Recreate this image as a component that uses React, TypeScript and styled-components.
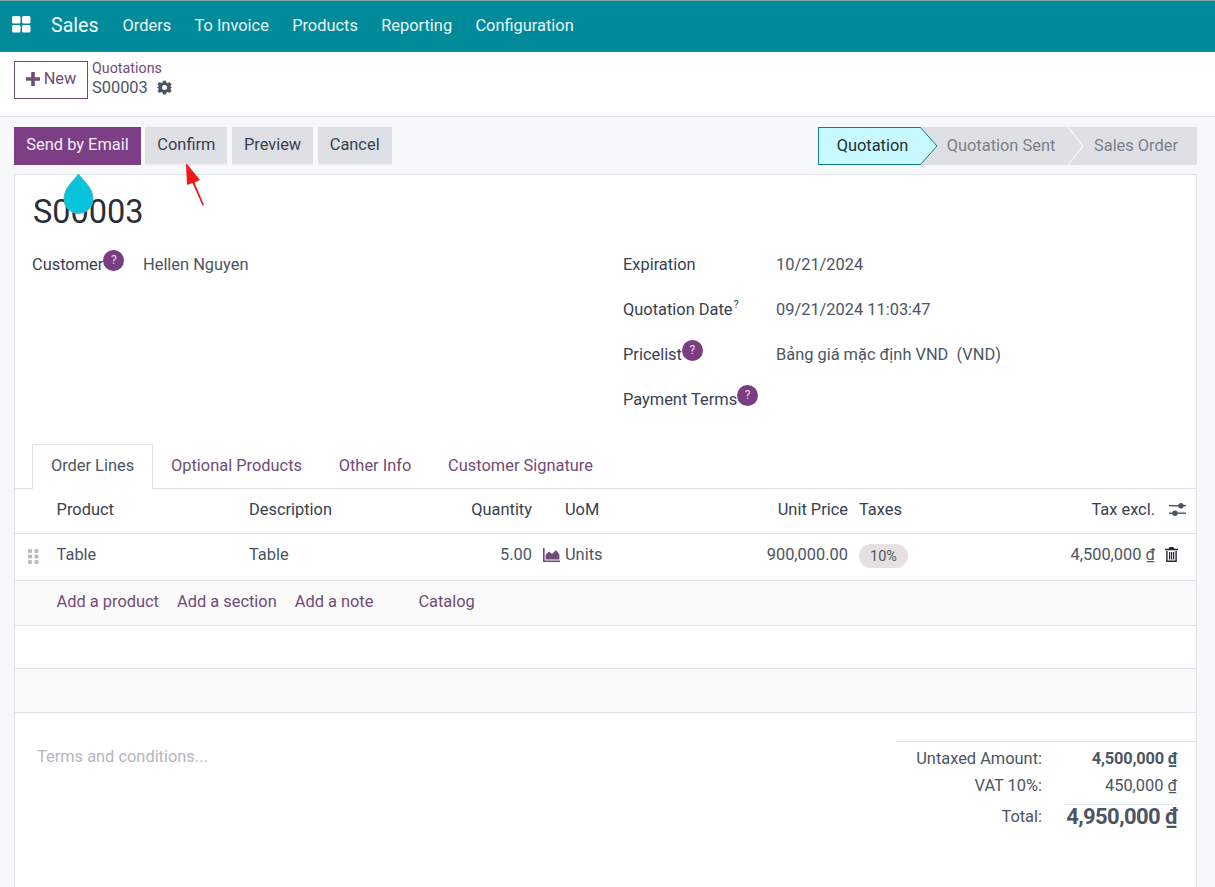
import React from 'react';
import styled, { createGlobalStyle } from 'styled-components';

const GlobalStyle = createGlobalStyle`
  html, body {
    margin: 0;
    padding: 0;
    height: 100%;
    overflow: hidden;
    background: #f7f8fa;
    font-family: Roboto, "Liberation Sans", sans-serif;
    font-size: 16.4px;
    color: #374151;
  }
`;

const Page = styled.div`
  position: relative;
  width: 1215px;
  height: 887px;
  overflow: hidden;
`;

const Navbar = styled.nav`
  display: flex;
  align-items: center;
  height: 51px;
  box-sizing: content-box;
  background: #018a9a;
  border-top: 1px solid #7fa8a8;
  padding: 0 0 0 12px;
  color: #fff;
`;

const AppsIcon = styled.svg`
  width: 19px;
  height: 17px;
  margin-right: 20px;
  margin-bottom: 4px;
`;

const Brand = styled.span`
  font-size: 19.6px;
  margin-right: 24px;
  padding-bottom: 2px;
  color: #f2fbfc;
`;

const NavItem = styled.span`
  margin-right: 23.3px;
  padding-bottom: 2px;
  color: #e8f6f7;
`;

const ControlPanel = styled.div`
  display: flex;
  align-items: flex-start;
  height: 65px;
  box-sizing: border-box;
  padding: 9px 14px 0;
  background: #fff;
  border-bottom: 1px solid #dfe1e6;
`;

const NewButton = styled.button`
  display: flex;
  align-items: center;
  justify-content: center;
  gap: 4px;
  width: 74px;
  height: 38px;
  padding: 0 0 3px;
  background: #fff;
  border: 1px solid #714b78;
  color: #714b78;
  font: inherit;
`;

const Crumbs = styled.div`
  margin: -1px 0 0 4px;
  display: flex;
  flex-direction: column;
`;

const CrumbLink = styled.span`
  font-size: 14.3px;
  line-height: 17px;
  color: #714b78;
`;

const CrumbCurrent = styled.span`
  display: flex;
  align-items: center;
  gap: 9px;
  line-height: 21px;
  color: #4b5563;
`;

const ActionBar = styled.div`
  display: flex;
  justify-content: space-between;
  height: 38px;
  margin: 10px 18px 9px 14px;
`;

const Buttons = styled.div`
  display: flex;
  gap: 4.4px;
`;

const ActionButton = styled.button<{ $primary?: boolean; $width: number }>`
  width: ${p => p.$width}px;
  height: 38px;
  box-sizing: border-box;
  padding: 0 0 2px;
  border: none;
  border-bottom: 2px solid ${p => (p.$primary ? '#7c3f85' : '#e7e9ec')};
  font: inherit;
  background: ${p => (p.$primary ? '#7c3f85' : '#dee0e5')};
  color: ${p => (p.$primary ? '#f5eef6' : '#374151')};
`;

const Status = styled.div`
  display: flex;
  height: 38px;
  background: #dee0e5;
`;

const StatusStep = styled.div<{ $active?: boolean; $width: number; $pad: number }>`
  position: relative;
  display: flex;
  align-items: center;
  justify-content: center;
  width: ${p => p.$width}px;
  box-sizing: border-box;
  padding: 0 0 2px ${p => p.$pad}px;
  color: ${p => (p.$active ? '#1f2f36' : '#7a808a')};
  background: ${p => (p.$active ? '#c8fbff' : 'transparent')};
  border: ${p => (p.$active ? '1px solid #0e7f86' : 'none')};
  border-right: none;
  z-index: ${p => (p.$active ? 2 : 1)};
`;

const Chevron = styled.svg<{ $top: number }>`
  position: absolute;
  top: ${p => p.$top}px;
  right: -18px;
  width: 18px;
  height: 38px;
`;

const Sheet = styled.div`
  margin: 0 18px 0 14px;
  height: 713px;
  background: #fff;
  border: 1px solid #dfe1e6;
  border-bottom: none;
  box-sizing: border-box;
`;

const Title = styled.h1`
  margin: 16px 0 0 18px;
  height: 42px;
  font-size: 32.5px;
  line-height: 42px;
  font-weight: 400;
  color: #2a2f36;
`;

const FormGrid = styled.div`
  display: grid;
  grid-template-columns: 591px 1fr;
  margin: 19px 0 0 17px;
  height: 192px;
`;

const FieldColumn = styled.div`
  display: flex;
  flex-direction: column;
  gap: 21px;
`;

const Field = styled.div`
  display: flex;
  height: 24px;
  align-items: center;
`;

const FieldLabel = styled.div<{ $width: number }>`
  display: flex;
  width: ${p => p.$width}px;
  flex-shrink: 0;
  color: #374151;
`;

const FieldValue = styled.div`
  color: #4b5563;
  white-space: pre;
`;

const HelpBadge = styled.span`
  display: inline-flex;
  align-items: center;
  justify-content: center;
  width: 21px;
  height: 21px;
  border-radius: 50%;
  margin-top: -5px;
  background: #7a3d82;
  color: #e9dcec;
  font-size: 12px;
`;

const SmallHelp = styled.sup`
  font-size: 11px;
  line-height: 0;
  margin-top: 5px;
  margin-left: 1px;
`;

const Tabs = styled.div`
  display: flex;
  height: 45px;
  padding-left: 17px;
  box-sizing: border-box;
  border-bottom: 1px solid #dfe1e6;
`;

const Tab = styled.div<{ $active?: boolean; $width: number }>`
  display: flex;
  align-items: center;
  justify-content: center;
  width: ${p => p.$width}px;
  height: ${p => (p.$active ? 45 : 44)}px;
  box-sizing: border-box;
  padding-bottom: ${p => (p.$active ? 4 : 2)}px;
  color: ${p => (p.$active ? '#4b5563' : '#714b78')};
  background: ${p => (p.$active ? '#fff' : 'transparent')};
  border: ${p => (p.$active ? '1px solid #dfe1e6' : 'none')};
  border-bottom: none;
`;

const Row = styled.div<{ $height: number; $lift: number }>`
  display: grid;
  grid-template-columns: 41.6px 192.4px 160px 123px 168px 148px 140px 1fr;
  align-items: center;
  height: ${p => p.$height}px;
  box-sizing: border-box;
  padding-bottom: ${p => p.$lift}px;
  border-bottom: 1px solid #dfe1e6;
`;

const HeadCell = styled.div<{ $right?: boolean; $pad?: number }>`
  color: #374151;
  text-align: ${p => (p.$right ? 'right' : 'left')};
  padding-left: ${p => p.$pad || 0}px;
  white-space: nowrap;
`;

const Cell = styled.div<{ $right?: boolean; $pad?: number }>`
  color: #4b5563;
  text-align: ${p => (p.$right ? 'right' : 'left')};
  padding-left: ${p => p.$pad || 0}px;
  white-space: nowrap;
`;

const IconCell = styled.div`
  display: flex;
  justify-content: center;
  align-items: center;
  padding: 4px 5px 0 0;
`;

const UomCell = styled(Cell)`
  position: relative;
  padding-left: 33px;
`;

const ChartIcon = styled.svg`
  position: absolute;
  left: 11px;
  top: 3px;
  width: 17px;
  height: 14px;
`;

const TaxBadge = styled.span`
  display: inline-flex;
  align-items: center;
  justify-content: center;
  width: 49px;
  height: 24px;
  margin-top: 4px;
  border-radius: 12px;
  background: #e7e0e0;
  font-size: 14.5px;
  color: #4b5563;
`;

const Currency = styled.span`
  text-decoration: underline;
`;

const TotalCell = styled.div<{ $pad: number; $gap: number; $dark?: boolean }>`
  display: flex;
  justify-content: flex-end;
  align-items: center;
  gap: ${p => p.$gap}px;
  padding-right: ${p => p.$pad}px;
  white-space: nowrap;
  color: ${p => (p.$dark ? '#374151' : '#4b5563')};
`;

const AddRow = styled.div`
  display: flex;
  align-items: center;
  height: 45px;
  box-sizing: border-box;
  padding: 0 0 4px 41.6px;
  background: #fbfafb;
  border-bottom: 1px solid #dfe1e6;
`;

const AddLink = styled.span<{ $gap: number }>`
  color: #714b78;
  margin-right: ${p => p.$gap}px;
`;

const EmptyRow = styled.div<{ $shade?: boolean; $height: number }>`
  height: ${p => p.$height}px;
  box-sizing: border-box;
  background: ${p => (p.$shade ? '#fbfafb' : '#fff')};
  border-bottom: 1px solid #dfe1e6;
`;

const Footer = styled.div`
  display: flex;
  justify-content: space-between;
`;

const Terms = styled.div`
  margin: 34px 0 0 22px;
  color: #b4b7bd;
`;

const Totals = styled.div`
  width: 300px;
  margin-top: 28px;
  border-top: 1px solid #dfe1e6;
  padding-top: 3px;
`;

const TotalRow = styled.div<{ $height: number; $top?: number }>`
  display: grid;
  grid-template-columns: 146px 135px;
  align-items: center;
  height: ${p => p.$height}px;
  margin-top: ${p => p.$top || 0}px;
`;

const TotalLabel = styled.div`
  text-align: right;
  color: #4b5563;
`;

const TotalValue = styled.div<{ $bold?: boolean; $big?: boolean; $rule?: boolean }>`
  text-align: right;
  white-space: nowrap;
  font-weight: ${p => (p.$bold ? 700 : 400)};
  font-size: ${p => (p.$big ? '22px' : '16.4px')};
  line-height: ${p => (p.$big ? '24px' : 'normal')};
  letter-spacing: ${p => (p.$big ? '-0.6px' : p.$bold ? '-0.2px' : '0')};
  color: #4b5563;
  ${p => p.$rule && 'border-top: 1px solid #dfe1e6; margin-left: 23px;'}
`;

const Drop = styled.svg`
  position: absolute;
  left: 63px;
  top: 173px;
  width: 31px;
  height: 41px;
`;

const Arrow = styled.svg`
  position: absolute;
  left: 182px;
  top: 162px;
  width: 26px;
  height: 46px;
`;

const Gear = () => (
  <svg width="15" height="15" viewBox="0 0 24 24" fill="#4b5563">
    <path fillRule="evenodd" d="M9.5 1h5l.7 3.2 1.9.8 2.8-1.8 3.5 3.5-1.8 2.8.8 1.9 3.2.7v0l-3.2.6-.8 1.9 1.8 2.8-3.5 3.5-2.8-1.8-1.9.8-.7 3.2h-5l-.7-3.2-1.9-.8-2.8 1.8L.8 17.4l1.8-2.8-.8-1.9L-1 12l2.8-.9.8-1.9L.8 6.5l3.5-3.5 2.8 1.8 1.9-.8zM12 8a4 4 0 1 0 0 8 4 4 0 0 0 0-8z" />
  </svg>
);

const Dots = () => (
  <svg width="11" height="15" viewBox="0 0 11 15" fill="#b9bcc2">
    {[0, 5.5, 11].map(y => (
      <React.Fragment key={y}>
        <rect x="0" y={y} width="4" height="4" rx="1" />
        <rect x="6.5" y={y} width="4" height="4" rx="1" />
      </React.Fragment>
    ))}
  </svg>
);

const Sliders = () => (
  <svg width="17" height="15" viewBox="0 0 17 15" fill="#4b5563">
    <rect x="0" y="3" width="17" height="1.4" />
    <circle cx="12" cy="3.7" r="2.7" />
    <rect x="0" y="10.5" width="17" height="1.4" />
    <circle cx="6" cy="11.2" r="2.7" />
  </svg>
);

const Trash = () => (
  <svg width="13" height="15" viewBox="0 0 13 15" fill="#1f2937">
    <path d="M4.6 0h3.8l1 1.8H13v1.4H0V1.8h3.6zM1.2 4h1.4v9.4h7.8V4h1.4v11H1.2zM4 5h1.2v7.4H4zm2 0h1.2v7.4H6zm2 0h1.2v7.4H8z" />
  </svg>
);

const App = () => (
  <Page>
    <GlobalStyle />
    <Navbar>
      <AppsIcon viewBox="0 0 19 17" fill="#fff">
        <rect x="0" y="0" width="8.5" height="7.5" rx="1.5" />
        <rect x="10" y="0" width="8.5" height="7.5" rx="1.5" />
        <rect x="0" y="9" width="8.5" height="7.5" rx="1.5" />
        <rect x="10" y="9" width="8.5" height="7.5" rx="1.5" />
      </AppsIcon>
      <Brand>Sales</Brand>
      <NavItem>Orders</NavItem>
      <NavItem>To Invoice</NavItem>
      <NavItem>Products</NavItem>
      <NavItem>Reporting</NavItem>
      <NavItem>Configuration</NavItem>
    </Navbar>

    <ControlPanel>
      <NewButton>
        <svg width="14" height="14" viewBox="0 0 14 14" fill="#714b78">
          <path d="M5.2 0h3.6v5.2H14v3.6H8.8V14H5.2V8.8H0V5.2h5.2z" />
        </svg>
        New
      </NewButton>
      <Crumbs>
        <CrumbLink>Quotations</CrumbLink>
        <CrumbCurrent>
          S00003
          <Gear />
        </CrumbCurrent>
      </Crumbs>
    </ControlPanel>

    <ActionBar>
      <Buttons>
        <ActionButton $primary $width={127}>Send by Email</ActionButton>
        <ActionButton $width={82}>Confirm</ActionButton>
        <ActionButton $width={81.5}>Preview</ActionButton>
        <ActionButton $width={74}>Cancel</ActionButton>
      </Buttons>
      <Status>
        <StatusStep $active $width={102} $pad={6}>
          Quotation
          <Chevron $top={-1} viewBox="0 0 18 38">
            <path d="M0 0L17 19L0 38" fill="#c8fbff" stroke="#0e7f86" strokeWidth="1" />
          </Chevron>
        </StatusStep>
        <StatusStep $width={148} $pad={14}>
          Quotation Sent
          <Chevron $top={0} viewBox="0 0 18 38">
            <path d="M0 0L15 19L0 38" fill="none" stroke="#f3f4f6" strokeWidth="1.5" />
          </Chevron>
        </StatusStep>
        <StatusStep $width={129} $pad={7}>Sales Order</StatusStep>
      </Status>
    </ActionBar>

    <Sheet>
      <Title>S00003</Title>
      <FormGrid>
        <FieldColumn>
          <Field>
            <FieldLabel $width={111}>Customer<HelpBadge>?</HelpBadge></FieldLabel>
            <FieldValue>Hellen Nguyen</FieldValue>
          </Field>
        </FieldColumn>
        <FieldColumn>
          <Field>
            <FieldLabel $width={153}>Expiration</FieldLabel>
            <FieldValue>10/21/2024</FieldValue>
          </Field>
          <Field>
            <FieldLabel $width={153}>Quotation Date<SmallHelp>?</SmallHelp></FieldLabel>
            <FieldValue>09/21/2024 11:03:47</FieldValue>
          </Field>
          <Field>
            <FieldLabel $width={153}>Pricelist<HelpBadge>?</HelpBadge></FieldLabel>
            <FieldValue>Bảng giá mặc định VND  (VND)</FieldValue>
          </Field>
          <Field>
            <FieldLabel $width={153}>Payment Terms<HelpBadge>?</HelpBadge></FieldLabel>
          </Field>
        </FieldColumn>
      </FormGrid>

      <Tabs>
        <Tab $active $width={121}>Order Lines</Tab>
        <Tab $width={167}>Optional Products</Tab>
        <Tab $width={110}>Other Info</Tab>
        <Tab $width={181}>Customer Signature</Tab>
      </Tabs>

      <Row $height={45} $lift={4}>
        <span />
        <HeadCell>Product</HeadCell>
        <HeadCell>Description</HeadCell>
        <HeadCell $right>Quantity</HeadCell>
        <HeadCell $pad={33}>UoM</HeadCell>
        <HeadCell $right>Unit Price</HeadCell>
        <HeadCell $pad={11}>Taxes</HeadCell>
        <TotalCell $pad={10} $gap={14} $dark>
          Tax excl.
          <Sliders />
        </TotalCell>
      </Row>
      <Row $height={47} $lift={6}>
        <IconCell><Dots /></IconCell>
        <Cell>Table</Cell>
        <Cell>Table</Cell>
        <Cell $right>5.00</Cell>
        <UomCell>
          <ChartIcon viewBox="0 0 17 14" fill="#714b78">
            <path d="M0 0h1.6v12.4H17V14H0zM2.6 11.4V7l3.4-3.5 3 2.6L13 2l3.4 4.5v4.9z" />
          </ChartIcon>
          Units
        </UomCell>
        <Cell $right>900,000.00</Cell>
        <Cell $pad={11}><TaxBadge>10%</TaxBadge></Cell>
        <TotalCell $pad={18} $gap={10}>
          <span>4,500,000 <Currency>₫</Currency></span>
          <Trash />
        </TotalCell>
      </Row>
      <AddRow>
        <AddLink $gap={18}>Add a product</AddLink>
        <AddLink $gap={18}>Add a section</AddLink>
        <AddLink $gap={45}>Add a note</AddLink>
        <AddLink $gap={0}>Catalog</AddLink>
      </AddRow>
      <EmptyRow $height={43} />
      <EmptyRow $shade $height={44} />

      <Footer>
        <Terms>Terms and conditions...</Terms>
        <Totals>
          <TotalRow $height={26}>
            <TotalLabel>Untaxed Amount:</TotalLabel>
            <TotalValue $bold>4,500,000 <Currency>₫</Currency></TotalValue>
          </TotalRow>
          <TotalRow $height={28}>
            <TotalLabel>VAT 10%:</TotalLabel>
            <TotalValue>450,000 <Currency>₫</Currency></TotalValue>
          </TotalRow>
          <TotalRow $height={24} $top={5}>
            <TotalLabel>Total:</TotalLabel>
            <TotalValue $bold $big $rule>4,950,000 <Currency>₫</Currency></TotalValue>
          </TotalRow>
        </Totals>
      </Footer>
    </Sheet>

    <Drop viewBox="0 0 31 41">
      <path d="M15.5 1C19 7 30 14 30 26a14.5 14.5 0 0 1-29 0C1 14 12 7 15.5 1z" fill="#06c4dc" stroke="#3fb6c9" strokeWidth="1" />
    </Drop>
    <Arrow viewBox="0 0 26 46">
      <path d="M4 1L18 18L12.5 20.5L22 43L20.5 43.5L10.5 21L5 23z" fill="#f01818" />
    </Arrow>
  </Page>
);

export default App;
